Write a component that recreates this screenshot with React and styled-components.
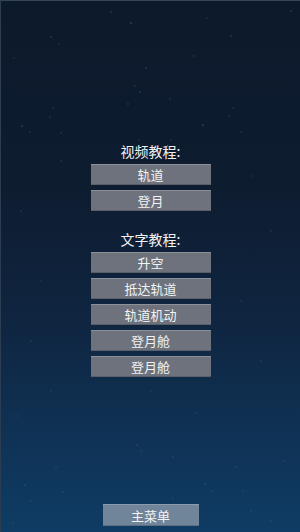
import React from 'react';
import styled, { createGlobalStyle } from 'styled-components';

const GlobalStyle = createGlobalStyle`
  html, body {
    margin: 0;
    padding: 0;
    background: #0d1a2b;
  }
  * { box-sizing: border-box; }
`;

const Screen = styled.div`
  position: relative;
  width: 300px;
  height: 532px;
  overflow: hidden;
  display: flex;
  flex-direction: column;
  align-items: center;
  background: linear-gradient(
    to bottom,
    #0d1a2c 0%,
    #0e1c30 35%,
    #0f2540 60%,
    #0f3458 85%,
    #0f3c64 100%
  );
  border-top: 1px solid #34455a;
  border-left: 1px solid #2c3d52;
  font-family: "Noto Sans CJK SC", "Noto Sans", sans-serif;
`;

const Stars = styled.svg`
  position: absolute;
  top: 0;
  left: 0;
  pointer-events: none;
`;

const Menu = styled.div`
  position: relative;
  display: flex;
  flex-direction: column;
  align-items: center;
  padding-top: 140px;
  flex: 1;
`;

const Heading = styled.div`
  color: #f0f2f5;
  font-size: 14px;
  line-height: 20px;
  margin-top: ${({ $first }) => ($first ? '0' : '18px')};
  margin-bottom: 3px;
`;

const Group = styled.div`
  display: flex;
  flex-direction: column;
  gap: 5px;
`;

const Button = styled.button`
  width: ${({ $wide }) => ($wide ? '96px' : '120px')};
  height: ${({ $wide }) => ($wide ? '22px' : '21px')};
  padding: 0;
  margin: 0;
  border: none;
  border-top: 1px solid ${({ $blue }) => ($blue ? '#8a9cac' : '#8b9099')};
  border-bottom: 1px solid ${({ $blue }) => ($blue ? '#5b6f82' : '#5a5f69')};
  background: ${({ $blue }) => ($blue ? '#70849a' : '#6d727c')};
  color: #f2f3f5;
  font-family: "Noto Sans CJK SC", "Noto Sans", sans-serif;
  font-size: 13px;
  line-height: 19px;
  cursor: pointer;
`;

const Footer = styled.div`
  position: relative;
  padding-bottom: 6px;
`;

const stars = [
  [110, 11, 0.6], [130, 22, 0.9], [290, 10, 0.6], [206, 17, 0.4], [50, 36, 0.6],
  [58, 43, 0.4], [230, 35, 0.6], [13, 57, 0.4], [193, 55, 0.5], [145, 67, 0.6],
  [134, 85, 0.5], [139, 91, 0.6], [169, 98, 0.5], [127, 103, 0.6], [52, 107, 0.5],
  [49, 116, 0.5], [232, 107, 0.5], [228, 115, 0.4], [21, 125, 0.8], [202, 124, 0.8],
  [29, 131, 0.5], [60, 132, 0.5], [240, 131, 0.5], [138, 139, 0.4], [170, 139, 0.4],
  [60, 160, 0.5], [250, 175, 0.4], [20, 210, 0.5], [270, 230, 0.5], [40, 280, 0.4],
  [240, 300, 0.4], [30, 340, 0.5], [260, 360, 0.4], [50, 390, 0.4], [150, 390, 0.4],
  [15, 415, 0.5], [195, 412, 0.4], [136, 444, 0.6], [140, 450, 0.4], [55, 466, 0.5],
  [172, 456, 0.4], [235, 466, 0.5], [283, 460, 0.4], [24, 484, 0.6], [62, 491, 0.5],
  [204, 483, 0.6], [211, 490, 0.4], [242, 490, 0.4], [30, 500, 0.4], [172, 497, 0.4],
  [250, 510, 0.4], [270, 520, 0.4], [12, 522, 0.4],
];

const videoLessons = ['轨道', '登月'];
const textLessons = ['升空', '抵达轨道', '轨道机动', '登月舱', '登月舱'];

export default function App() {
  return (
    <>
      <GlobalStyle />
      <Screen>
        <Stars width="300" height="532" viewBox="0 0 300 532">
          {stars.map(([x, y, o], i) => (
            <circle key={i} cx={x} cy={y} r="0.75" fill="#7f95ad" opacity={o * 0.6} />
          ))}
        </Stars>
        <Menu>
          <Heading $first>视频教程:</Heading>
          <Group>
            {videoLessons.map((t, i) => (
              <Button key={i}>{t}</Button>
            ))}
          </Group>
          <Heading>文字教程:</Heading>
          <Group>
            {textLessons.map((t, i) => (
              <Button key={i}>{t}</Button>
            ))}
          </Group>
        </Menu>
        <Footer>
          <Button $wide $blue>主菜单</Button>
        </Footer>
      </Screen>
    </>
  );
}
